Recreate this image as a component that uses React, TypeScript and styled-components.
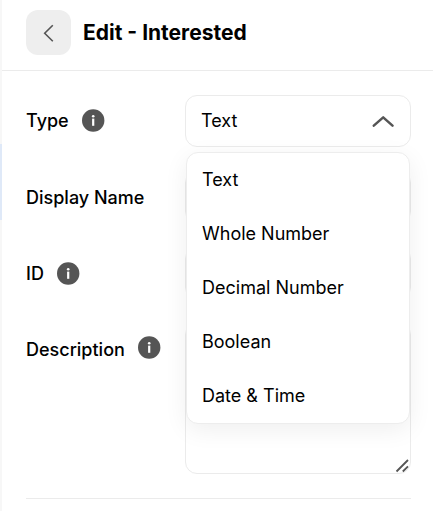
import React from 'react';
import styled, { createGlobalStyle } from 'styled-components';

const GlobalStyle = createGlobalStyle`
  * { box-sizing: border-box; }
  body { margin: 0; background: #fff; overflow: hidden; font-family: Inter, "Liberation Sans", sans-serif; color: #000; }
`;

const Page = styled.div`
  display: flex;
  width: 433px;
  height: 511px;
  overflow: hidden;
`;

const Rail = styled.div`
  flex: 0 0 2px;
  background: #f7f7f7;
  padding-top: 144px;
`;

const RailSelection = styled.div`
  height: 76px;
  background: #dfe9f8;
`;

const Panel = styled.main`
  flex: 1;
  min-width: 0;
`;

const Header = styled.header`
  display: flex;
  align-items: flex-start;
  gap: 12px;
  height: 71px;
  padding: 10px 0 0 24px;
  border-bottom: 1px solid #ebebeb;
`;

const BackButton = styled.button`
  display: flex;
  width: 45px;
  height: 45px;
  padding: 0;
  border: 0;
  border-radius: 12px;
  background: #eee;
`;

const Title = styled.h1`
  margin: 0;
  font-size: 21px;
  line-height: 45px;
  font-weight: 700;
  white-space: nowrap;
`;

const Form = styled.form`
  display: flex;
  flex-direction: column;
  gap: 24px;
  width: 385px;
  margin: 24px 0 0 24px;
  padding-bottom: 24px;
  border-bottom: 1px solid #ebebeb;
`;

const Field = styled.div`
  display: grid;
  grid-template-columns: 159px 226px;
`;

const Label = styled.div<{ $lift?: number }>`
  display: flex;
  align-items: center;
  gap: 13px;
  height: 52px;
  padding-bottom: ${(p) => p.$lift ?? 0}px;
  font-size: 18px;
  font-weight: 500;
  white-space: nowrap;
`;

const LabelText = styled.span<{ $low?: boolean }>`
  padding-top: ${(p) => (p.$low ? 4 : 0)}px;
`;

const InfoSvg = styled.svg`
  flex: none;
  display: block;
`;

const Control = styled.div`
  position: relative;
`;

const Box = styled.div<{ $height?: number }>`
  display: flex;
  align-items: center;
  justify-content: space-between;
  height: ${(p) => p.$height ?? 52}px;
  padding: 0 16px 0 15px;
  border: 1px solid #ebebeb;
  border-radius: 12px;
  font-size: 18px;
`;

const Value = styled.span`
  padding-bottom: 2px;
`;

const TextArea = styled(Box)`
  align-items: flex-end;
  justify-content: flex-end;
  padding: 0;
`;

const Menu = styled.ul`
  position: absolute;
  z-index: 1;
  top: 57px;
  left: 1px;
  width: 224px;
  margin: 0;
  padding: 0;
  list-style: none;
  border: 1px solid #ededed;
  border-radius: 12px;
  background: #fff;
  box-shadow: 0 6px 24px rgba(0, 0, 0, 0.065);
`;

const Option = styled.li`
  height: 54px;
  padding-left: 15px;
  font-size: 18px;
  line-height: 54px;
`;

const Info = () => (
  <InfoSvg width="23" height="23" viewBox="0 0 23 23">
    <circle cx="11.2" cy="11.5" r="11.2" fill="#555" />
    <circle cx="11.2" cy="7.2" r="1.3" fill="#fff" />
    <rect x="10.1" y="9.6" width="2.2" height="7.2" fill="#fff" />
  </InfoSvg>
);

const options = ['Text', 'Whole Number', 'Decimal Number', 'Boolean', 'Date & Time'];

export default function App() {
  return (
    <Page>
      <GlobalStyle />
      <Rail>
        <RailSelection />
      </Rail>
      <Panel>
        <Header>
          <BackButton type="button" aria-label="Back">
            <svg width="45" height="45" viewBox="0 0 45 45" fill="none" stroke="#555" strokeWidth="1.6">
              <path d="M26.8 15.2 18.7 23.2 26.8 31.2" />
            </svg>
          </BackButton>
          <Title>Edit - Interested</Title>
        </Header>
        <Form>
          <Field>
            <Label $lift={2}><LabelText>Type</LabelText><Info /></Label>
            <Control>
              <Box>
                <Value>Text</Value>
                <svg width="22" height="12" viewBox="0 0 22 12" fill="none" stroke="#555" strokeWidth="2.5" strokeLinecap="round" strokeLinejoin="round">
                  <path d="M1.8 10.6 11.2 2.4 20.5 10.6" />
                </svg>
              </Box>
              <Menu>
                {options.map((name) => <Option key={name}>{name}</Option>)}
              </Menu>
            </Control>
          </Field>
          <Field>
            <Label><LabelText>Display Name</LabelText></Label>
            <Box />
          </Field>
          <Field>
            <Label><LabelText>ID</LabelText><Info /></Label>
            <Box />
          </Field>
          <Field>
            <Label $lift={3}><LabelText $low>Description</LabelText><Info /></Label>
            <TextArea $height={151}>
              <svg width="15" height="14" viewBox="0 0 15 14" fill="none" stroke="#555" strokeWidth="1.8">
                <path d="M1.5 12.5 13 1M7.8 12.5 13 7.3" />
              </svg>
            </TextArea>
          </Field>
        </Form>
      </Panel>
    </Page>
  );
}
